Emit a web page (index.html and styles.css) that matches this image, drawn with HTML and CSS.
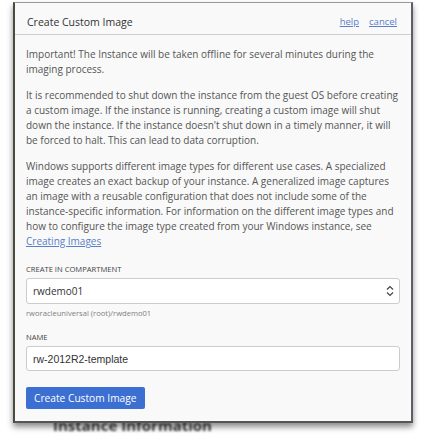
FILE: index.html
```html
<!DOCTYPE html>
<html lang="en">
<head>
  <meta charset="UTF-8" />
  <title>Create Custom Image</title>
  <link rel="stylesheet" href="styles.css">
</head>
<body>
  <div class="page">
    <div class="dialog">
      <div class="dialog-header">
        <span class="dialog-title">Create Custom Image</span>
        <span class="dialog-links"><a href="#">help</a><a href="#">cancel</a></span>
      </div>
      <div class="dialog-body">
        <p>Important! The Instance will be taken offline for several minutes during the imaging process.</p>
        <p>It is recommended to shut down the instance from the guest OS before creating a custom image. If the instance is running, creating a custom image will shut down the instance. If the instance doesn't shut down in a timely manner, it will be forced to halt. This can lead to data corruption.</p>
        <p>Windows supports different image types for different use cases. A specialized image creates an exact backup of your instance. A generalized image captures an image with a reusable configuration that does not include some of the instance-specific information. For information on the different image types and how to configure the image type created from your Windows instance, see <a href="#">Creating Images</a></p>

        <label class="field-label" for="compartment">Create in compartment</label>
        <div class="select-wrap">
          <select id="compartment">
            <option>rwdemo01</option>
          </select>
          <svg class="select-arrows" width="8" height="12" viewBox="0 0 8 12"><path d="M1 4.5 L4 1.5 L7 4.5 M1 7.5 L4 10.5 L7 7.5" fill="none" stroke="#444" stroke-width="1.2"/></svg>
        </div>
        <div class="field-help">rworacleuniversal (root)/rwdemo01</div>

        <label class="field-label name-label" for="name">Name</label>
        <input id="name" type="text" value="rw-2012R2-template">

        <button class="btn-primary">Create Custom Image</button>
      </div>
    </div>
    <div class="behind">Instance Information</div>
  </div>
</body>
</html>
```

FILE: styles.css
```css
body { margin: 0; background: #fff; font-family: "Open Sans", "Noto Sans", sans-serif; overflow: hidden; }
.page { height: 436px; overflow: hidden; }
.dialog { position: relative; z-index: 2; width: 396px; margin: 2px 0 0 13px; background: #f9f9f9; border-top: 1px solid #999; border-left: 2px solid #4a4a3e; border-right: 2px solid #5c5f6a; border-bottom: 2px solid #555; box-shadow: 0 4px 6px rgba(0,0,0,0.45); }
.dialog-header { display: flex; justify-content: space-between; align-items: center; height: 32px; padding: 6px 14px 0 12px; box-sizing: border-box; border-bottom: 1px solid #cfcfcf; }
.dialog-title { font-size: 10.5px; color: #333; }
.dialog-links { display: flex; gap: 10px; }
.dialog-links a, .dialog-body a { font-size: 9.5px; color: #5a7ec9; text-decoration: underline; }
.dialog-body { padding: 12px 11px 12px 11px; }
.dialog-body p { margin: 0 0 11px 0; font-size: 10px; line-height: 15px; color: #555; }
.dialog-body p a { font-size: inherit; }
.field-label { display: block; margin-top: 15px; font-size: 7.6px; line-height: 10px; text-transform: uppercase; color: #444; }
.name-label { margin-top: 14px; }
.select-wrap { position: relative; margin-top: 4px; }
select, input { display: block; box-sizing: border-box; width: 100%; height: 26px; padding: 0 6px; margin: 0; background: #fff; border: 1px solid #ccc; border-radius: 3px; color: #333; }
select { appearance: none; -webkit-appearance: none; font-family: "Open Sans", "Noto Sans", sans-serif; font-size: 10px; }
.select-arrows { position: absolute; right: 6px; top: 7px; }
.field-help { margin-top: 4px; font-size: 7.6px; line-height: 10px; color: #808080; }
input { margin-top: 4px; height: 25px; font-family: "Liberation Sans", Arial, sans-serif; font-size: 10.5px; }
.btn-primary { display: block; margin-top: 16px; height: 22px; padding: 0 8px; background: #3c6fd2; border: none; border-radius: 2px; color: #fff; font-family: "Open Sans", "Noto Sans", sans-serif; font-size: 10.2px; }
.behind { margin: -8px 0 0 53px; font-size: 15px; font-weight: bold; color: #3a3a3a; filter: blur(1.2px); position: relative; z-index: 1; }
```
